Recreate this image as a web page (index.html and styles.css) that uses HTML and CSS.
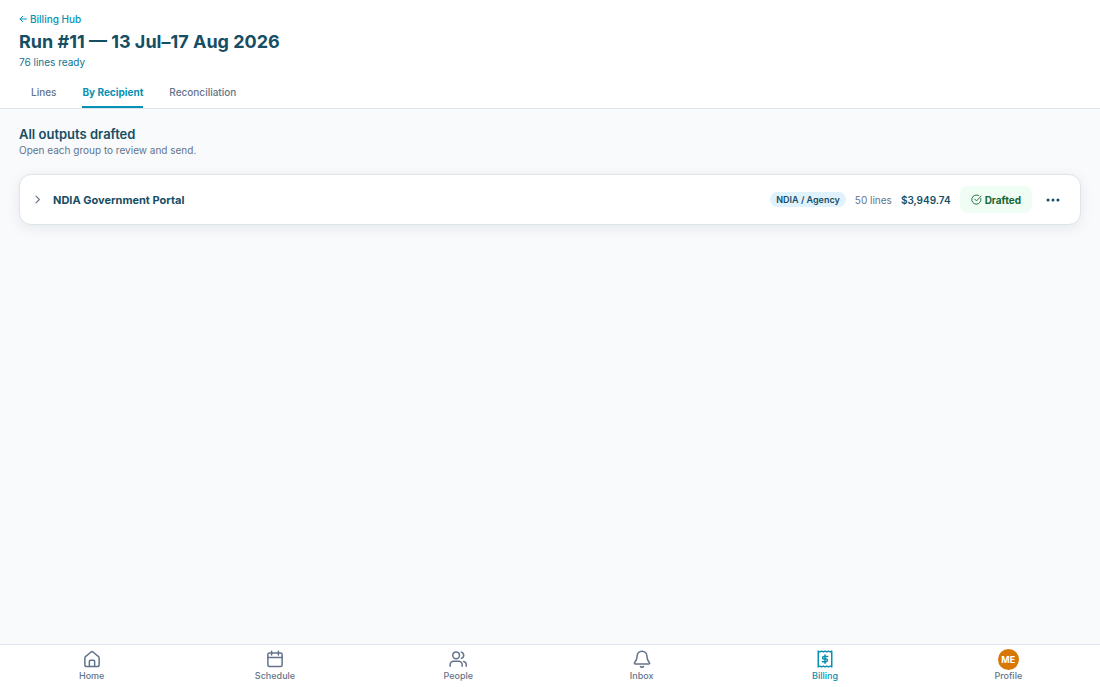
FILE: index.html
```html
<!DOCTYPE html>
<html lang="en">
<head>
    <meta charset="UTF-8">
    <meta name="viewport" content="width=device-width, initial-scale=1.0">
    <title>Billing Run #11</title>
    <link rel="stylesheet" href="styles.css">
</head>
<body>

    <!-- Header Section -->
    <header class="page-header">
        <a class="back-link" href="#billing">
            <svg class="back-icon" viewBox="0 0 24 24"><path d="M22 12H3M11 4l-8 8 8 8"/></svg>
            Billing Hub
        </a>
        <h1>Run #11 — 13 Jul–17 Aug 2026</h1>
        <p class="run-status">76 lines ready</p>
        <nav class="tabs">
            <a class="tab" href="#lines">Lines</a>
            <a class="tab active" href="#recipient">By Recipient</a>
            <a class="tab" href="#reconciliation">Reconciliation</a>
        </nav>
    </header>

    <!-- Recipient Groups -->
    <main>
        <h2>All outputs drafted</h2>
        <p class="hint">Open each group to review and send.</p>

        <section class="group-card">
            <button class="group-toggle" type="button" aria-expanded="false">
                <svg class="chevron" viewBox="0 0 24 24"><path d="M8 3l9 9-9 9"/></svg>
                NDIA Government Portal
            </button>
            <span class="badge">NDIA / Agency</span>
            <span class="line-count">50 lines</span>
            <span class="amount">$3,949.74</span>
            <button class="drafted" type="button">
                <svg class="check-icon" viewBox="0 0 24 24"><path d="M21.5 10a10 10 0 1 1-5-6.7"/><path d="M8 11l4 4L22 4.500"/></svg>
                Drafted
            </button>
            <button class="more" type="button" aria-label="More actions">
                <svg class="more-icon" viewBox="0 0 24 24"><circle cx="3.500" cy="12" r="2.600"/><circle cx="12" cy="12" r="2.600"/><circle cx="20.500" cy="12" r="2.600"/></svg>
            </button>
        </section>
    </main>

    <!-- Bottom Navigation -->
    <nav class="bottom-nav">
        <a class="nav-item" href="#home">
            <svg class="nav-icon" viewBox="0 0 24 24"><path d="M2.500 10.500a2 2 0 0 1 .8-1.600l7.500-6.300a2 2 0 0 1 2.400 0l7.500 6.300a2 2 0 0 1 .8 1.600V19.500a2.500 2.500 0 0 1-2.500 2.500h-14a2.500 2.500 0 0 1-2.500-2.500z"/><path d="M8.500 22v-7a1.500 1.500 0 0 1 1.500-1.500h4a1.500 1.500 0 0 1 1.500 1.500v7"/></svg>
            Home
        </a>
        <a class="nav-item" href="#schedule">
            <svg class="nav-icon" viewBox="0 0 24 24"><rect x="2.500" y="4" width="19" height="18" rx="2"/><path d="M2.500 10h19M7.500 1.500v5M16.500 1.500v5"/></svg>
            Schedule
        </a>
        <a class="nav-item" href="#people">
            <svg class="nav-icon" viewBox="0 0 24 24"><circle cx="9.500" cy="7" r="4.500"/><path d="M1.500 21.500v-2A4.500 4.500 0 0 1 6 15h7a4.500 4.500 0 0 1 4.500 4.500v2"/><path d="M16.500 2.800a4.400 4.400 0 0 1 0 8.400M23 21.500v-2a4.500 4.500 0 0 0-3.500-4.300"/></svg>
            People
        </a>
        <a class="nav-item" href="#inbox">
            <svg class="nav-icon" viewBox="0 0 24 24"><path d="M12 1.500A6.500 6.500 0 0 0 5.500 8c0 5-1.600 6.700-3.500 9a.9.9 0 0 0 .7 1.500h18.600A.9.9 0 0 0 22 17c-1.900-2.300-3.500-4-3.500-9A6.500 6.500 0 0 0 12 1.500z"/><path d="M10 22a2.400 2.400 0 0 0 4 0"/></svg>
            Inbox
        </a>
        <a class="nav-item active" href="#billing">
            <svg class="nav-icon" viewBox="0 0 24 24"><path d="M3 1.500l2.200 1 2.300-1 2.200 1 2.300-1 2.300 1 2.200-1 2.300 1 2.200-1v21l-2.200-1-2.300 1-2.200-1-2.300 1-2.300-1-2.200 1-2.300-1-2.200 1z"/><path d="M15.500 8.500h-5a1.750 1.750 0 0 0 0 3.500h3a1.750 1.750 0 0 1 0 3.500h-5M12 6.500v11"/></svg>
            Billing
        </a>
        <a class="nav-item" href="#profile">
            <span class="avatar">ME</span>
            Profile
        </a>
    </nav>

</body>
</html>
```
FILE: styles.css
```css
* {
    box-sizing: border-box;
}

body {
    display: flex;
    flex-direction: column;
    min-height: 100vh;
    margin: 0;
    font-family: Inter, sans-serif;
    font-size: 10px;
    line-height: 16px;
    color: #64748b;
    background-color: #f8fafc;
}

h1, h2, p {
    margin: 0;
}

a {
    color: inherit;
    text-decoration: none;
}

button {
    display: flex;
    align-items: center;
    padding: 0;
    border: none;
    background: none;
    font: inherit;
    color: inherit;
    cursor: pointer;
}

svg {
    flex: none;
    fill: none;
    stroke: currentColor;
    stroke-width: 2;
    stroke-linecap: round;
    stroke-linejoin: round;
}

.page-header {
    padding: 11px 19px 0;
    background-color: #fff;
    border-bottom: 1px solid #dde3ea;
}

.back-link {
    display: flex;
    align-items: center;
    gap: 3px;
    font-weight: 500;
    color: #0891b2;
}

.back-icon {
    width: 8px;
    height: 8px;
    stroke-width: 3;
}

h1 {
    padding-top: 3px;
    font-size: 18px;
    line-height: 24px;
    font-weight: 700;
    color: #164e63;
}

.run-status {
    color: #0e7490;
}

.tabs {
    display: flex;
    gap: 26px;
    margin-top: 7px;
    padding: 0 12px;
}

.tab {
    padding: 7px 0 6px;
    border-bottom: 2px solid transparent;
    font-weight: 500;
}

.tab.active {
    font-weight: 700;
    color: #0891b2;
    border-color: #0891b2;
}

main {
    flex: 1;
    padding: 17px 19px;
}

h2 {
    font-size: 13px;
    line-height: 17px;
    font-weight: 600;
    color: #164e63;
}

.hint {
    line-height: 14px;
}

.group-card {
    display: flex;
    align-items: center;
    gap: 9px;
    margin-top: 17px;
    padding: 11px 15px 11px 13px;
    background-color: #fff;
    border: 1px solid #dfe3ea;
    border-radius: 12px;
    box-shadow: 0 3px 14px rgba(15, 23, 42, 0.08);
}

.group-toggle {
    flex: 1;
    gap: 11px;
    font-size: 11px;
    font-weight: 700;
    color: #164e63;
}

.chevron {
    width: 9px;
    height: 9px;
    color: #64748b;
    stroke-width: 3;
}

.badge {
    padding: 0 6px;
    border-radius: 8px;
    font-size: 9px;
    line-height: 15px;
    font-weight: 600;
    color: #164e63;
    background-color: #e0f2fe;
}

.amount {
    font-weight: 600;
    color: #164e63;
}

.drafted {
    gap: 3px;
    height: 27px;
    padding: 0 11px;
    border-radius: 8px;
    font-weight: 700;
    color: #166534;
    background-color: #f0fdf4;
}

.check-icon {
    width: 11px;
    height: 11px;
}

.more {
    justify-content: center;
    width: 24px;
    height: 27px;
    color: #164e63;
}

.more-icon {
    width: 14px;
    height: 14px;
    fill: currentColor;
    stroke: none;
}

.bottom-nav {
    display: flex;
    height: 43px;
    padding-top: 4px;
    background-color: #fff;
    border-top: 1px solid #dde3ea;
}

.nav-item {
    display: flex;
    flex: 1;
    flex-direction: column;
    align-items: center;
    font-size: 9px;
    line-height: 11px;
    font-weight: 500;
}

.nav-item.active {
    color: #0891b2;
}

.nav-icon {
    width: 18px;
    height: 18px;
    margin: 1px 0 2px;
}

.avatar {
    width: 21px;
    height: 21px;
    border-radius: 50%;
    font-size: 9px;
    line-height: 21px;
    font-weight: 700;
    text-align: center;
    color: #fff;
    background-color: #d97706;
}
```
